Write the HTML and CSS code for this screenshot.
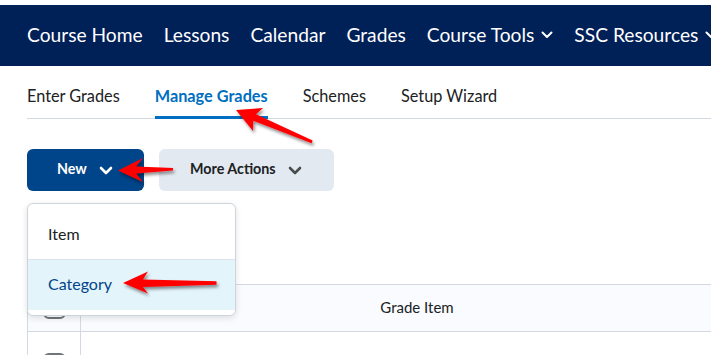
FILE: index.html
```html
<!DOCTYPE html>
<html lang="en">
<head>
  <meta charset="UTF-8" />
  <meta name="viewport" content="width=device-width, initial-scale=1.0"/>
  <title>Manage Grades</title>
  <link rel="stylesheet" href="styles.css">
</head>
<body>

  <nav class="navbar">
    <a class="nav-link">Course Home</a>
    <a class="nav-link">Lessons</a>
    <a class="nav-link">Calendar</a>
    <a class="nav-link">Grades</a>
    <a class="nav-link">Course Tools
      <svg class="nav-chevron" viewBox="0 0 12 8"><path d="M1.5 1.5 L6 6 L10.5 1.5" /></svg>
    </a>
    <a class="nav-link">SSC Resources
      <svg class="nav-chevron" viewBox="0 0 12 8"><path d="M1.5 1.5 L6 6 L10.5 1.5" /></svg>
    </a>
  </nav>

  <div class="tabs">
    <a class="tab">Enter Grades</a>
    <a class="tab active">Manage Grades</a>
    <a class="tab">Schemes</a>
    <a class="tab">Setup Wizard</a>
  </div>

  <div class="toolbar">
    <div class="btn-wrap">
      <button class="btn btn-primary">New
        <svg class="btn-chevron" viewBox="0 0 14 9"><path d="M2 2 L7 7 L12 2" /></svg>
      </button>

      <!-- dropdown opened from "New" -->
      <div class="menu">
        <div class="menu-item first">Item</div>
        <div class="menu-item selected">Category</div>
      </div>
    </div>
    <button class="btn btn-secondary">More Actions
      <svg class="btn-chevron" viewBox="0 0 14 9"><path d="M2 2 L7 7 L12 2" /></svg>
    </button>
  </div>

  <div class="table-wrap">
    <table class="grades">
      <tr class="head">
        <th class="col-check"><span class="checkbox"></span></th>
        <th>Grade Item</th>
      </tr>
      <tr>
        <td class="col-check"><span class="checkbox"></span></td>
        <td></td>
      </tr>
    </table>
  </div>

  <!-- screenshot annotation arrows -->
  <svg class="arrows" viewBox="0 0 711 355">
    <defs>
      <filter id="shadow" x="-20%" y="-40%" width="140%" height="180%">
        <feDropShadow dx="1.5" dy="2.5" stdDeviation="1.6" flood-color="#000" flood-opacity="0.45" />
      </filter>
    </defs>
    <g fill="#ff0000" filter="url(#shadow)">
      <polygon points="236,110 263,108 256,114.2 312.6,140.6 311.6,143.2 253.3,120.8 253,131" />
      <polygon points="118,170.5 143,158 136,166.5 173,168 173,170.5 136,173.5 143,182" />
      <polygon points="123,283 148,271.5 143,279.5 216.5,281.2 216.5,284.8 143,287 148,293.5" />
    </g>
  </svg>

</body>
</html>
```

FILE: styles.css
```css
* {
  box-sizing: border-box;
}

html {
  overflow: hidden;
}

body {
  margin: 0;
  padding: 0;
  background: #fff;
  font-family: Lato, 'Liberation Sans', sans-serif;
  color: #202122;
  width: 711px;
  height: 355px;
  overflow: hidden;
  position: relative;
}

/* top navigation */
.navbar {
  margin-top: 5px;
  height: 61px;
  background-color: #002058;
  display: flex;
  align-items: center;
  gap: 21px;
  padding: 0 0 3px 27px;
  white-space: nowrap;
  overflow: hidden;
}

.nav-link {
  color: #fff;
  font-size: 19.2px;
  display: flex;
  align-items: center;
  gap: 7px;
  flex-shrink: 0;
}

.nav-chevron {
  width: 12px;
  height: 8px;
  fill: none;
  stroke: #fff;
  stroke-width: 2;
  stroke-linecap: round;
  stroke-linejoin: round;
  margin-top: 2px;
}

/* tabs */
.tabs {
  margin-left: 27px;
  display: flex;
  gap: 35px;
  border-bottom: 1px solid #d3d9e3;
}

.tab {
  font-size: 16.3px;
  line-height: 20px;
  padding: 20px 0 10px;
  border-bottom: 3px solid transparent;
  margin-bottom: -1px;
  color: #202122;
}

.tab.active {
  color: #006fbf;
  font-weight: 700;
  border-bottom-color: #006fbf;
}

/* buttons */
.toolbar {
  margin: 30px 0 0 27px;
  display: flex;
  gap: 15px;
}

.btn-wrap {
  position: relative;
}

.btn {
  height: 42px;
  border: none;
  border-radius: 6px;
  padding: 0 0 3px 30px;
  font-family: Lato, 'Liberation Sans', sans-serif;
  font-size: 14.3px;
  font-weight: 700;
  white-space: nowrap;
  display: flex;
  align-items: center;
  gap: 12px;
  cursor: pointer;
}

.btn-primary {
  background-color: #004489;
  color: #fff;
  width: 117px;
}

.btn-secondary {
  background-color: #e3e9f1;
  color: #202122;
  width: 175px;
  padding-left: 31px;
}

.btn-chevron {
  width: 14px;
  height: 9px;
  flex-shrink: 0;
  fill: none;
  stroke-width: 2.6;
  stroke-linecap: round;
  stroke-linejoin: round;
  margin-top: 3px;
}

.btn-primary .btn-chevron {
  stroke: #fff;
}

.btn-secondary .btn-chevron {
  stroke: #494c4e;
}

/* dropdown menu */
.menu {
  position: absolute;
  top: calc(100% + 12px);
  left: 0;
  width: 209px;
  background: #fff;
  border: 1px solid #cdd5dc;
  border-radius: 6px;
  padding-bottom: 5px;
  box-shadow: 0 2px 6px rgba(0, 0, 0, 0.12);
  overflow: hidden;
  z-index: 10;
}

.menu-item {
  font-size: 16px;
  height: 50px;
  line-height: 50px;
  padding-left: 20px;
}

.menu-item.first {
  height: 56px;
  padding-top: 3px;
  line-height: 53px;
  border-bottom: 1px solid #dde3ea;
}

.menu-item.selected {
  background-color: #e3f4fb;
  color: #004489;
  line-height: 48px;
}

/* grade table */
.table-wrap {
  margin: 93px 0 0 27px;
  height: 80px;
  overflow: hidden;
}

.grades {
  width: 727px;
  border-collapse: collapse;
}

.grades th,
.grades td {
  border: 1px solid #d3d9e3;
  padding: 0;
}

.grades .head {
  background-color: #f9fbff;
  height: 47px;
}

.grades th {
  font-size: 15px;
  font-weight: 400;
  color: #202122;
  text-align: center;
  padding-bottom: 2px;
}

.grades td {
  height: 66px;
}

.col-check {
  width: 53px;
  text-align: center;
  vertical-align: middle;
}

.checkbox {
  display: inline-block;
  width: 23px;
  height: 23px;
  border: 2px solid #6e7477;
  border-radius: 6px;
  vertical-align: middle;
  background: #fff;
}

.arrows {
  position: absolute;
  top: 0;
  left: 0;
  width: 711px;
  height: 355px;
  pointer-events: none;
  z-index: 20;
}
```
